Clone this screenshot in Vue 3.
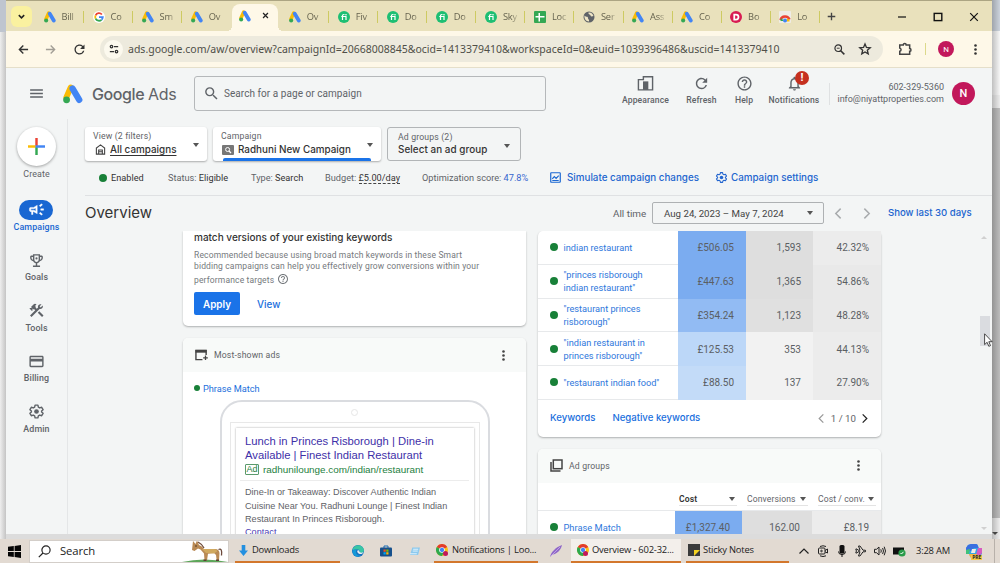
<script setup>
import { ref } from 'vue'

const tabs = [
  { icon: 'ads', label: 'Bill' },
  { icon: 'google', label: 'Co' },
  { icon: 'ads', label: 'Sm' },
  { icon: 'ads', label: 'Ov' },
  { icon: 'ads', label: '', active: true },
  { icon: 'ads', label: 'Ov' },
  { icon: 'fi', label: 'Fiv' },
  { icon: 'fi', label: 'Do' },
  { icon: 'fi', label: 'Do' },
  { icon: 'fi', label: 'Sky' },
  { icon: 'sheet', label: 'Loc' },
  { icon: 'globe', label: 'Ser' },
  { icon: 'ads', label: 'Ass' },
  { icon: 'ads', label: 'Co' },
  { icon: 'dash', label: 'Bo' },
  { icon: 'looker', label: 'Lo' }
]

const navItems = [
  { id: 'campaigns', label: 'Campaigns', icon: 'campaign' },
  { id: 'goals', label: 'Goals', icon: 'trophy' },
  { id: 'tools', label: 'Tools', icon: 'tools' },
  { id: 'billing', label: 'Billing', icon: 'card' },
  { id: 'admin', label: 'Admin', icon: 'gear' }
]

const keywords = [
  { name: ['indian restaurant'], cost: '£506.05', clicks: '1,593', ctr: '42.32%', level: 1 },
  { name: ['"princes risborough', 'indian restaurant"'], cost: '£447.63', clicks: '1,365', ctr: '54.86%', level: 2 },
  { name: ['"restaurant princes', 'risborough"'], cost: '£354.24', clicks: '1,123', ctr: '48.28%', level: 3 },
  { name: ['"indian restaurant in', 'princes risborough"'], cost: '£125.53', clicks: '353', ctr: '44.13%', level: 4 },
  { name: ['"restaurant indian food"'], cost: '£88.50', clicks: '137', ctr: '27.90%', level: 5 }
]

const currentPage = ref('campaigns')

const navigate = (page) => {
  currentPage.value = page
}
</script>

<template>
  <svg class="sprite">
    <symbol id="ads" viewBox="0 0 24 24">
      <path d="M9.2 4.2 4 16" stroke="#fbbc04" stroke-width="7" stroke-linecap="round" />
      <path d="M11.5 5.5 19.5 19" stroke="#4285f4" stroke-width="7.6" stroke-linecap="round" />
      <circle cx="4.3" cy="19" r="4.1" fill="#34a853" />
    </symbol>
    <symbol id="google" viewBox="0 0 24 24">
      <circle cx="12" cy="12" r="12" fill="#fff" />
      <g fill="none" stroke-width="3.6">
        <path d="M17.8 7A7.6 7.6 0 0 0 5.2 8.6" stroke="#ea4335" />
        <path d="M5.2 8.6a7.6 7.6 0 0 0 0 6.8" stroke="#fbbc04" />
        <path d="M5.2 15.4a7.6 7.6 0 0 0 11.8 2.2" stroke="#34a853" />
        <path d="M17 17.6a7.6 7.6 0 0 0 2.6-5.2H12" stroke="#4285f4" />
      </g>
    </symbol>
    <symbol id="fi" viewBox="0 0 24 24">
      <circle cx="12" cy="12" r="12" fill="#1dbf73" />
      <path d="M9 18V9.5Q9 7 11.5 7H13M6.5 11H16v7" fill="none" stroke="#fff" stroke-width="2.4" />
      <circle cx="16" cy="7.4" r="1.6" fill="#fff" />
    </symbol>
    <symbol id="sheet" viewBox="0 0 24 24">
      <rect width="24" height="24" rx="2" fill="#34a853" />
      <path d="M3 11.5h18M10.5 4v17" stroke="#fff" stroke-width="3" />
    </symbol>
    <symbol id="globe" viewBox="0 0 24 24">
      <circle cx="12" cy="12" r="11" fill="#5f6368" />
      <path d="M3 9c3 4 7 1 7 5s3 2 2 7c-6 0-10-6-9-12zM11 3c-1 4 3 3 4 6s3 2 6 1c-1-4-5-8-10-7z" fill="#eee5c6" />
    </symbol>
    <symbol id="dash" viewBox="0 0 24 24">
      <circle cx="12" cy="12" r="12" fill="#d81b52" />
      <path d="M8.5 7H12a5 5 0 0 1 0 10H8.500z" fill="none" stroke="#fff" stroke-width="3.500" />
    </symbol>
    <symbol id="looker" viewBox="0 0 24 24">
      <rect width="24" height="24" rx="2" fill="#efece6" />
      <path d="M3 18a9.500 9.500 0 0 1 18-1" fill="none" stroke="#ea4335" stroke-width="5" />
      <path d="M3 20a9 9 0 0 1 2-6l4 6z" fill="#34a853" />
      <path d="M15 21l1-6 5 2v4z" fill="#fbbc04" />
      <circle cx="12" cy="19" r="4" fill="#4285f4" />
    </symbol>
    <symbol id="chrome" viewBox="0 0 24 24">
      <circle cx="12" cy="12" r="12" fill="#fbc116" />
      <path d="M12 12 1.600 6a12 12 0 0 1 20.800 0z" fill="#e33b2e" />
      <path d="M12 12 1.600 6A12 12 0 0 0 12 24l4-8z" fill="#2da94f" />
      <circle cx="12" cy="12" r="5.600" fill="#fff" />
      <circle cx="12" cy="12" r="4.300" fill="#4285f4" />
    </symbol>
    <symbol id="search" viewBox="0 0 24 24">
      <path d="M15.500 14h-.79l-.28-.27A6.471 6.471 0 0 0 16 9.500 6.500 6.500 0 1 0 9.500 16c1.610 0 3.090-.59 4.230-1.570l.27.28v.79l5 4.990L20.490 19l-4.990-5zm-6 0C7.010 14 5 11.990 5 9.500S7.010 5 9.500 5 14 7.010 14 9.500 11.990 14 9.500 14z" />
    </symbol>
    <symbol id="menu" viewBox="0 0 24 24">
      <path d="M3 18h18v-2H3v2zm0-5h18v-2H3v2zm0-7v2h18V6H3z" />
    </symbol>
    <symbol id="refresh" viewBox="0 0 24 24">
      <path d="M17.650 6.350A7.958 7.958 0 0 0 12 4c-4.420 0-7.990 3.580-7.990 8s3.570 8 7.990 8c3.730 0 6.840-2.550 7.730-6h-2.080A5.990 5.990 0 0 1 12 18c-3.310 0-6-2.690-6-6s2.690-6 6-6c1.660 0 3.140.69 4.220 1.780L13 11h7V4l-2.350 2.350z" />
    </symbol>
    <symbol id="help" viewBox="0 0 24 24">
      <path d="M11 18h2v-2h-2v2zm1-16C6.480 2 2 6.480 2 12s4.480 10 10 10 10-4.480 10-10S17.520 2 12 2zm0 18c-4.410 0-8-3.590-8-8s3.590-8 8-8 8 3.590 8 8-3.590 8-8 8zm0-14c-2.210 0-4 1.790-4 4h2c0-1.100.9-2 2-2s2 .9 2 2c0 2-3 1.750-3 5h2c0-2.250 3-2.500 3-5 0-2.210-1.790-4-4-4z" />
    </symbol>
    <symbol id="bell" viewBox="0 0 24 24">
      <path d="M12 22c1.100 0 2-.9 2-2h-4c0 1.100.9 2 2 2zm6-6v-5c0-3.070-1.630-5.640-4.500-6.320V4c0-.83-.67-1.500-1.500-1.500s-1.500.67-1.500 1.500v.68C7.640 5.360 6 7.920 6 11v5l-2 2v1h16v-1l-2-2zm-2 1H8v-6c0-2.480 1.510-4.500 4-4.500s4 2.020 4 4.500v6z" />
    </symbol>
    <symbol id="appearance" viewBox="0 0 24 24">
      <path d="M2 6.500h7V2.500h13V21H2z" fill="none" stroke="currentColor" stroke-width="2" />
      <path d="M8.500 9H16v12H8.500z" />
    </symbol>
    <symbol id="campaign" viewBox="0 0 24 24">
      <path d="M18 11v2h4v-2zM16 17.600l3.200 2.400 1.200-1.600-3.200-2.400zM20.400 5.600 19.200 4 16 6.400 17.200 8zM4 9a2 2 0 0 0-2 2v2c0 1.100.9 2 2 2h1v4h2v-4h1l5 3V6L8 9H4zm7 1v4.500L8.600 13H4v-2h4.600z" fill-rule="evenodd" stroke="currentColor" stroke-width=".6" />
    </symbol>
    <symbol id="trophy" viewBox="0 0 24 24">
      <path d="M19 5h-2V3H7v2H5c-1.100 0-2 .9-2 2v1c0 2.550 1.920 4.630 4.390 4.940.63 1.500 1.980 2.630 3.610 2.960V19H7v2h10v-2h-4v-3.100c1.630-.33 2.980-1.460 3.610-2.960C19.080 12.630 21 10.550 21 8V7c0-1.100-.9-2-2-2zM5 8V7h2v3.820C5.840 10.400 5 9.300 5 8zm7 6c-1.650 0-3-1.350-3-3V5h6v6c0 1.650-1.350 3-3 3zm7-6c0 1.300-.84 2.400-2 2.820V7h2v1z" />
      <circle cx="12" cy="9" r="1.500" />
    </symbol>
    <symbol id="tools" viewBox="0 0 24 24">
      <path d="M13.780 15.170l2.120-2.120 6 6-2.120 2.120zM17.500 10c1.930 0 3.500-1.570 3.500-3.500 0-.58-.16-1.120-.41-1.600l-2.700 2.700-1.490-1.490 2.700-2.700c-.48-.25-1.020-.41-1.600-.41C15.570 3 14 4.570 14 6.500c0 .41.08.8.21 1.160l-1.850 1.850-1.780-1.780.71-.71-1.410-1.410L12 3.490a3 3 0 0 0-4.240 0L4.220 7.030l1.410 1.410H2.810l-.71.71 3.540 3.540.71-.71V9.150l1.410 1.410.71-.71 1.780 1.780-7.410 7.410 2.120 2.120L16.340 9.790c.36.13.75.21 1.160.21z" />
    </symbol>
    <symbol id="card" viewBox="0 0 24 24">
      <path d="M20 4H4c-1.110 0-1.990.89-1.990 2L2 18c0 1.110.89 2 2 2h16c1.110 0 2-.89 2-2V6c0-1.110-.89-2-2-2zm0 14H4v-6h16v6zm0-10H4V6h16v2z" />
    </symbol>
    <symbol id="gear" viewBox="0 0 24 24">
      <path d="M10 3h4l.6 2.800 2 1.150 2.700-.9 2 3.450L19.200 11.400v1.200l2.100 1.900-2 3.450-2.700-.9-2 1.150L14 21h-4l-.6-2.800-2-1.150-2.700.9-2-3.450 2.100-1.900v-1.200L2.700 9.500l2-3.450 2.700.9 2-1.150z" fill="none" stroke="currentColor" stroke-width="2" stroke-linejoin="round" />
      <circle cx="12" cy="12" r="3.300" />
    </symbol>
    <symbol id="dots" viewBox="0 0 24 24">
      <circle cx="12" cy="4.500" r="2.400" /><circle cx="12" cy="12" r="2.400" /><circle cx="12" cy="19.500" r="2.400" />
    </symbol>
    <symbol id="left" viewBox="0 0 24 24">
      <path d="M16 3 7 12l9 9" fill="none" stroke="currentColor" stroke-width="2.700" />
    </symbol>
    <symbol id="right" viewBox="0 0 24 24">
      <path d="M8 3l9 9-9 9" fill="none" stroke="currentColor" stroke-width="2.700" />
    </symbol>
  </svg>

  <div class="desktop">
    <div class="behind-left"></div>
    <div class="behind-right"><i></i></div>

    <div class="window">
      <div class="tab-strip">
        <span class="tab-search">
          <svg viewBox="0 0 10 10"><path d="M2 3.500 5 6.500 8 3.500" fill="none" stroke="#222" stroke-width="1.700" /></svg>
        </span>
        <div v-for="(tab, i) in tabs" :key="i" class="tab" :class="{ active: tab.active, flush: i === 3 }">
          <svg><use :href="'#' + tab.icon" /></svg>
          <span v-if="!tab.active" class="tab-label">{{ tab.label }}</span>
          <svg v-else class="tab-close" viewBox="0 0 10 10"><path d="M1.500 1.500l7 7M8.500 1.500l-7 7" stroke="#222" stroke-width="1.800" /></svg>
        </div>
        <svg class="tab-new" viewBox="0 0 10 10"><path d="M5 .8v8.400M.8 5h8.400" stroke="#444" stroke-width="1.500" /></svg>
        <div class="window-buttons">
          <svg viewBox="0 0 10 10"><path d="M1 5h8" stroke="#111" stroke-width="1.200" /></svg>
          <svg viewBox="0 0 10 10"><rect x="1.200" y="1.400" width="7.600" height="7.200" fill="none" stroke="#111" stroke-width="1.400" /></svg>
          <svg viewBox="0 0 10 10"><path d="M1.200 1.200l7.600 7.600M8.800 1.200 1.200 8.800" stroke="#111" stroke-width="1.200" /></svg>
        </div>
      </div>

      <div class="toolbar">
        <svg class="nav-arrow" viewBox="0 0 12 12"><path d="M11 6H1.500M5.800 1.700 1.500 6l4.300 4.300" fill="none" stroke="#333" stroke-width="1.500" /></svg>
        <svg class="nav-arrow faded" viewBox="0 0 12 12"><path d="M1 6h9.500M6.200 1.700 10.500 6l-4.300 4.300" fill="none" stroke="#333" stroke-width="1.500" /></svg>
        <svg class="reload"><use href="#refresh" /></svg>
        <div class="address">
          <span class="site-info">
            <svg viewBox="0 0 12 12" fill="none" stroke="#333" stroke-width="1.500"><circle cx="3" cy="3" r="1.500" /><path d="M6 3h5M1 9h5" /><circle cx="9" cy="9" r="1.500" /></svg>
          </span>
          <span class="url">ads.google.com/aw/overview?campaignId=20668008845&amp;ocid=1413379410&amp;workspaceId=0&amp;euid=1039396486&amp;uscid=1413379410</span>
          <svg class="zoom-icon" viewBox="0 0 12 12" fill="none" stroke="#333"><circle cx="4.600" cy="4.600" r="3.600" stroke-width="1.300" /><path d="M7.300 7.300l4 4" stroke-width="1.700" /><path d="M3 4.600h3.200" /></svg>
          <svg class="star" viewBox="0 0 24 24"><path d="M12 3.500l2.500 5.900 6.400.5-4.900 4.200 1.500 6.300-5.500-3.400-5.500 3.400L8 14.100 3.100 9.900l6.400-.5z" fill="none" stroke="#333" stroke-width="2.300" /></svg>
        </div>
        <svg class="puzzle" viewBox="0 0 24 24"><path d="M3 5h6c0-3 5-3 5 0h6v6c3 0 3 5 0 5v5H3v-5c3-.5 3-5 0-5.500z" fill="none" stroke="#444" stroke-width="2.600" /></svg>
        <i class="toolbar-line"></i>
        <span class="profile">N</span>
        <svg class="browser-menu"><use href="#dots" /></svg>
      </div>

      <header class="header">
        <svg class="menu-icon"><use href="#menu" /></svg>
        <svg class="logo"><use href="#ads" /></svg>
        <span class="brand">Google <b>Ads</b></span>
        <div class="search-box">
          <svg><use href="#search" /></svg>
          <span>Search for a page or campaign</span>
        </div>
        <div class="actions">
          <div class="action appearance"><svg><use href="#appearance" /></svg><span>Appearance</span></div>
          <div class="action refresh"><svg><use href="#refresh" /></svg><span>Refresh</span></div>
          <div class="action help"><svg><use href="#help" /></svg><span>Help</span></div>
          <div class="action notifications"><svg><use href="#bell" /></svg><em>!</em><span>Notifications</span></div>
        </div>
        <div class="account">
          <span>602-329-5360</span>
          <span class="email">info@niyattproperties.com</span>
        </div>
        <span class="avatar">N</span>
      </header>

      <div class="body">
        <nav class="sidebar">
          <div class="create">
            <span>
              <svg viewBox="0 0 18 18" stroke-width="2.600"><path d="M9 0v9" stroke="#ea4335" /><path d="M9 9v9" stroke="#34a853" /><path d="M0 9h8" stroke="#fbbc04" /><path d="M8 9h10" stroke="#4285f4" /></svg>
            </span>
            Create
          </div>
          <div
            v-for="item in navItems"
            :key="item.id"
            class="nav-item"
            :class="{ active: currentPage === item.id }"
            @click="navigate(item.id)"
          >
            <span class="nav-icon"><svg><use :href="'#' + item.icon" /></svg></span>
            <span class="nav-label">{{ item.label }}</span>
          </div>
        </nav>

        <main class="main">
          <div class="filters">
            <div class="filter view">
              <small>View (2 filters)</small>
              <div class="filter-value">
                <svg class="home" viewBox="0 0 12 12" fill="none" stroke="#444" stroke-width="1.200"><path d="M1.500 11V4.500L6 1l4.500 3.500V11zM4 11V6.500h4V11M4 8.500h4" /></svg>
                <span class="underlined">All campaigns</span>
              </div>
              <i class="caret"></i>
            </div>
            <div class="filter campaign">
              <small>Campaign</small>
              <div class="filter-value">
                <svg class="camp" viewBox="0 0 12 10"><rect width="12" height="10" rx="1" fill="#777" /><circle cx="5.600" cy="4.500" r="2" fill="none" stroke="#fff" /><path d="M7 6l2 2" stroke="#fff" stroke-width="1.200" /></svg>
                <span>Radhuni New Campaign</span>
              </div>
              <i class="caret"></i>
            </div>
            <div class="filter group">
              <small>Ad groups (2)</small>
              <div class="filter-value"><span>Select an ad group</span></div>
              <i class="caret"></i>
            </div>
          </div>

          <div class="status">
            <span class="s-enabled"><i class="dot"></i><b>Enabled</b></span>
            <span class="s-status">Status: <b>Eligible</b></span>
            <span class="s-type">Type: <b>Search</b></span>
            <span class="s-budget">Budget: <b class="dashed">£5.00/day</b></span>
            <span class="s-score">Optimization score: <a>47.8%</a></span>
            <span class="s-link simulate">
              <svg viewBox="0 0 12 12" fill="none" stroke="#1a67d2" stroke-width="1.300"><rect x=".8" y=".8" width="10.400" height="10.400" rx=".6" /><path d="M2.500 7.500 4.700 5l2 2L9.500 4M2.500 9.300h7" /></svg>
              Simulate campaign changes
            </span>
            <span class="s-link settings"><svg><use href="#gear" /></svg>Campaign settings</span>
          </div>

          <div class="title-row">
            <h1>Overview</h1>
            <span class="range-label">All time</span>
            <div class="range"><span>Aug 24, 2023 – May 7, 2024</span><i class="caret"></i></div>
            <svg class="prev"><use href="#left" /></svg>
            <svg class="next"><use href="#right" /></svg>
            <span class="last-days">Show last 30 days</span>
          </div>

          <div class="content">
            <div class="column left">
              <section class="box recommendation">
                <h3>match versions of your existing keywords</h3>
                <p>Recommended because using broad match keywords in these Smart<br>bidding campaigns can help you effectively grow conversions within your<br>performance targets <svg><use href="#help" /></svg></p>
                <div class="buttons"><button>Apply</button><a>View</a></div>
              </section>

              <section class="box shown-ads">
                <div class="box-head">
                  <svg class="head-icon" viewBox="0 0 14 12"><path d="M12 6V1H1v10h7" fill="none" stroke="#444" stroke-width="1.500" /><path d="M.5.500h12v3H.5z" fill="#444" /><path d="M11.300 6.500v5M8.800 9h5" stroke="#444" stroke-width="1.400" /></svg>
                  <span>Most-shown ads</span>
                  <svg class="more"><use href="#dots" /></svg>
                </div>
                <div class="ad-group"><i class="dot"></i>Phrase Match</div>
                <div class="phone">
                  <i class="camera"></i>
                  <div class="screen">
                    <div class="ad">
                      <div class="ad-title">Lunch in Princes Risborough | Dine-in<br>Available | Finest Indian Restaurant</div>
                      <div class="ad-url"><span>Ad</span>radhunilounge.com/indian/restaurant</div>
                      <div class="ad-text">Dine-In or Takeaway: Discover Authentic Indian<br>Cuisine Near You. Radhuni Lounge | Finest Indian<br>Restaurant In Princes Risborough.<br><a>Contact</a></div>
                    </div>
                  </div>
                </div>
              </section>
            </div>

            <div class="column right">
              <section class="box keywords">
                <div v-for="row in keywords" :key="row.cost" class="row" :class="'level-' + row.level">
                  <div class="cell name">
                    <i class="dot"></i>
                    <div><div v-for="line in row.name" :key="line">{{ line }}</div></div>
                  </div>
                  <div class="cell cost">{{ row.cost }}</div>
                  <div class="cell clicks">{{ row.clicks }}</div>
                  <div class="cell ctr">{{ row.ctr }}</div>
                </div>
                <div class="box-foot">
                  <a>Keywords</a>
                  <a class="negative">Negative keywords</a>
                  <svg class="page-prev"><use href="#left" /></svg>
                  <span>1 / 10</span>
                  <svg class="page-next"><use href="#right" /></svg>
                </div>
              </section>

              <section class="box groups">
                <div class="box-head">
                  <svg class="head-icon" viewBox="0 0 13 13" fill="none" stroke="#444" stroke-width="1.500"><rect x="3.300" y="1" width="8.700" height="8.700" /><path d="M1 3v9h9.500" /></svg>
                  <span>Ad groups</span>
                  <svg class="more"><use href="#dots" /></svg>
                </div>
                <div class="columns">
                  <div class="sorted">Cost<i class="caret"></i></div>
                  <div class="col-conv">Conversions<i class="caret"></i></div>
                  <div class="col-cpc">Cost / conv.<i class="caret"></i></div>
                </div>
                <div class="row level-1">
                  <div class="cell name"><i class="dot"></i>Phrase Match</div>
                  <div class="cell cost">£1,327.40</div>
                  <div class="cell clicks">162.00</div>
                  <div class="cell ctr">£8.19</div>
                </div>
              </section>
            </div>
            <i class="thumb"></i>
            <i class="scroll-up"></i>
            <i class="scroll-down"></i>
          </div>
        </main>
      </div>
    </div>

    <div class="taskbar">
      <svg class="start" viewBox="0 0 13 13"><path d="M0 1.800l5.800-.8v5.100H0zM6.600.9 13 0v6.100H6.600zM0 6.900h5.800V12L0 11.200zM6.600 6.900H13V13l-6.400-.9z" fill="#050505" /></svg>
      <div class="task-search">
        <svg viewBox="0 0 13 13" fill="none" stroke="#222" stroke-width="1.200"><circle cx="8" cy="5" r="4.100" /><path d="M5 8 .8 12.200" /></svg>
        <span>Search</span>
        <svg class="donkey" viewBox="0 0 46 22">
          <path d="M0 22q22-5 46 0z" fill="#5da65a" />
          <path d="M11 1l2.500 3L15 .500l2 4.500q3 1 5 4h11q4 0 4.500 4l-.5 7.500h-2.300l-.7-5.500-2-2-6 .8-1 6.700h-2.500l-.5-7-3.500-4-2.500-1-3.500 2.500-2.500-1z" fill="#b98a55" />
          <path d="M20 9h12q3 0 3 2.500l-3 2-8-.5z" fill="#d0a95f" />
          <path d="M16 2q4 2 6 6M36.500 9.500q4-2 3 6" fill="none" stroke="#6d4a3b" stroke-width="1.300" />
          <path d="M21.500 20.300h3M34 20.300h3" stroke="#5b3e35" stroke-width="1.500" />
          <circle cx="14" cy="6" r=".7" fill="#2c1d18" />
        </svg>
      </div>
      <div class="task downloads">
        <svg viewBox="0 0 10 12"><path d="M3 0h4v6h3l-5 6-5-6h3z" fill="#2490e0" /></svg>Downloads
      </div>
      <svg class="edge" viewBox="0 0 24 24">
        <circle cx="12" cy="12" r="12" fill="#1672c0" />
        <path d="M1 10C3-3 22-3 24 10c0 6-6 7-9 5 2-4-1-7-5-6-4 0-7 2-9 1z" fill="#39c6a4" />
        <path d="M9 10c-3 4 0 12 9 11-9 6-17-1-17-9 2-4 6-4 8-2z" fill="#1599d8" />
        <path d="M11 11q4-2 4 3 4 3 8 0-1 3-4 4c-6 1-10-4-8-7z" fill="#e9eef2" />
      </svg>
      <svg class="store" viewBox="0 0 24 24">
        <path d="M8 6V2h8v4" fill="none" stroke="#1b6db5" stroke-width="2" />
        <rect y="5" width="24" height="18" rx="2" fill="#17508c" />
        <path d="M7 9h4.500v4.500H7z" fill="#f25022" /><path d="M12.500 9H17v4.500h-4.500z" fill="#7fba00" />
        <path d="M7 14.500h4.500V19H7z" fill="#00a4ef" /><path d="M12.500 14.500H17V19h-4.500z" fill="#ffb900" />
      </svg>
      <svg class="notepad" viewBox="0 0 24 20"><path d="M6 1h17l-4 17H1z" fill="#8cc9ee" /><path d="M8 5h11M7 9h11M1 15h15" stroke="#e9f6fd" stroke-width="2" /></svg>
      <div class="task notes">
        <svg><use href="#chrome" /></svg><em></em><span>Notifications | Loo...</span>
      </div>
      <svg class="feather" viewBox="0 0 12 12"><path d="M0 12C1 7 6 2 12 0 11 5 7 9 2.500 9.500z" fill="#9068c8" /><path d="M1 11l9-9" stroke="#c9aee8" stroke-width=".8" /></svg>
      <div class="task overview">
        <svg><use href="#chrome" /></svg><em></em><span>Overview - 602-32...</span>
      </div>
      <div class="task sticky">
        <svg viewBox="0 0 12 12"><path d="M0 0h12v12H0z" fill="#3a3a3a" /><path d="M6 12V6h6z" fill="#f5d21f" /></svg><span>Sticky Notes</span>
      </div>
      <div class="tray">
        <svg viewBox="0 0 12 12" fill="none" stroke="#222" stroke-width="1.200"><path d="M1.500 8.500l4.500-4.500 4.500 4.500" /></svg>
        <svg viewBox="0 0 12 12" fill="none" stroke="#222"><path d="M3 1.500q3-1.500 6 0M3 10.800q3 1.500 6 0" /><rect x="1.500" y="3" width="6.500" height="6" rx="1" /><path d="M8 5.500l2.500-1.500v4L8 6.800" /><circle cx="4.500" cy="6" r=".8" /></svg>
        <svg viewBox="0 0 12 12"><rect x="3.500" y="0" width="5" height="8.500" rx="1.500" fill="#111" /><path d="M2.500 6.500q0 3 3.500 3t3.500-3M6 9.500V12" fill="none" stroke="#111" /></svg>
        <svg viewBox="0 0 12 12" fill="none" stroke="#222"><path d="M.8 4h1.200l1 1.200h2L3.500 1H5l3 4.200h2.300q1.200.8 0 1.600H8L5 11H3.500L5 6.800H3L2 8H.8l.6-2z" /></svg>
        <svg viewBox="0 0 12 12" fill="none" stroke="#222"><path d="M.5 4.300h2L5 2v8L2.500 7.700h-2zM6.800 4.300q1 1.700 0 3.400M8.600 3q1.800 3 0 6M10.200 1.700q2.600 4.300 0 8.600" /></svg>
        <svg viewBox="0 0 12 12"><path d="M0 2.500h11v7H0z" fill="#111" /><circle cx="9" cy="8" r="3.600" fill="#2a9c4a" /><path d="M7.500 8l1 1 2-2.200" fill="none" stroke="#fff" /></svg>
      </div>
      <span class="clock">3:28 AM</span>
      <div class="copilot">
        <svg viewBox="0 0 16 16">
          <path d="M5 1h5q1.500 0 2 2l.8 2H16v6l-4 4H6q-1.500 0-2-2l-.8-2H0V5l2-3z" fill="#37a6e6" />
          <path d="M5 1h5q1.500 0 2 2l.5 2H8L5 8 0 7V5l2-3z" fill="#3b6fe0" />
          <path d="M0 7l4-1-1 5H0z" fill="#3fc27a" />
          <path d="M12 5h4v5l-4 5H9z" fill="#d65bc0" />
          <path d="M3 11h8l-1 4H6q-2 0-3-4z" fill="#f3b33c" />
          <path d="M6 6h4l-1 4H5z" fill="#f1ece6" />
        </svg>
        <span>PRE</span>
      </div>
      <i class="show-desktop"></i>
    </div>

    <svg class="cursor" viewBox="0 0 9 14"><path d="M.6.8v10.800l2.500-2.300 1.700 4 1.700-.7-1.700-3.900h3.300z" fill="#fff" stroke="#222" stroke-width=".8" /></svg>
  </div>
</template>

<style>
body {
  margin: 0;
  overflow: hidden;
}
</style>

<style scoped>
* {
  box-sizing: border-box;
}

svg {
  display: block;
  flex: none;
  overflow: visible;
}

svg:not([fill]) {
  fill: currentColor;
}

i,
em {
  font-style: normal;
  flex: none;
}

.sprite {
  position: absolute;
  width: 0;
  height: 0;
}

.desktop {
  position: relative;
  width: 1000px;
  height: 563px;
  overflow: hidden;
  display: flex;
  flex-direction: column;
  background: #dcdcdc;
  font-family: Roboto, "Liberation Sans", sans-serif;
  color: #5f6368;
  white-space: nowrap;
}

.behind-left {
  position: absolute;
  left: 0;
  top: 0;
  width: 6px;
  height: 539px;
  background: linear-gradient(#bfc5cf 0 32px, transparent 32px), linear-gradient(90deg, #eeeeee, #c4c4c4);
}

.behind-right {
  position: absolute;
  right: 0;
  top: 0;
  width: 8px;
  height: 539px;
  background: linear-gradient(90deg, rgba(0, 0, 0, 0.22), transparent), linear-gradient(#ccd3dc 0 31px, #f6f6f6 31px 95px, #ececec 95px 108px, #bdbdbd 108px 518px, #eeeeee 518px);
}

.behind-right i {
  position: absolute;
  left: 0;
  bottom: 4px;
  border: 3px solid transparent;
  border-top-color: #444;
  border-bottom: 0;
}

.window {
  position: relative;
  width: 986px;
  height: 534px;
  margin-left: 6px;
  background: #f3f5f5;
  display: flex;
  flex-direction: column;
  overflow: hidden;
  flex: none;
}

.tab-strip {
  display: flex;
  align-items: center;
  height: 31px;
  padding: 1px 13px 0 5px;
  background: #e9e1bc;
  border-top: 1px solid #aca583;
  flex: none;
}

.tab-search {
  width: 21px;
  height: 21px;
  border-radius: 6px;
  background: #faf1a0;
  display: grid;
  place-items: center;
  margin-right: 3px;
}

.tab-search svg {
  width: 9px;
  height: 9px;
}

.tab {
  position: relative;
  display: flex;
  align-items: center;
  width: 49.05px;
  height: 12px;
  padding-left: 8.5px;
  border-right: 1px solid #cdca62;
  flex: none;
}

.tab > svg {
  width: 12px;
  height: 12px;
}

.tab.flush {
  border-right-color: transparent;
}

.tab-label {
  width: 17px;
  margin-left: 6px;
  font: 9.3px/14px "Open Sans", "Noto Sans", sans-serif;
  letter-spacing: -0.2px;
  color: #66634f;
  -webkit-mask-image: linear-gradient(90deg, #000 50%, transparent 95%);
}

.tab.active {
  height: 27px;
  align-self: flex-end;
  background: #fef8e8;
  border: 0;
  border-radius: 8px 8px 0 0;
  width: 46px;
  margin-left: 1px;
  margin-right: 2px;
  padding-left: 7px;
  padding-bottom: 4px;
}

.tab.active::before,
.tab.active::after {
  content: "";
  position: absolute;
  bottom: 0;
  width: 5px;
  height: 5px;
}

.tab.active::before {
  left: -5px;
  background: radial-gradient(circle at 0 0, transparent 5px, #fef8e8 5px);
}

.tab.active::after {
  right: -5px;
  background: radial-gradient(circle at 100% 0, transparent 5px, #fef8e8 5px);
}

.tab.active .tab-close {
  width: 7px;
  height: 7px;
  margin-left: 11px;
}

.tab-new {
  width: 9px;
  height: 9px;
  margin-left: 7px;
}

.window-buttons {
  display: flex;
  gap: 26px;
  margin-left: auto;
}

.window-buttons svg {
  width: 10px;
  height: 10px;
}

.toolbar {
  display: flex;
  align-items: center;
  height: 37px;
  padding: 0 8px 0 12px;
  background: #fef8e8;
  border-bottom: 1px solid #e5dfca;
  flex: none;
  color: #333;
}

.nav-arrow {
  width: 11px;
  height: 11px;
  margin-right: 16px;
}

.faded {
  opacity: 0.45;
}

.reload {
  width: 15px;
  height: 15px;
}

.address {
  display: flex;
  align-items: center;
  width: 783px;
  height: 26px;
  margin-left: 13px;
  padding: 0 11px 0 4px;
  border-radius: 13px;
  background: #edeadd;
  flex: none;
}

.site-info {
  display: grid;
  place-items: center;
  width: 19px;
  height: 19px;
  border-radius: 50%;
  background: #fcf9ee;
}

.site-info svg {
  width: 10px;
  height: 10px;
}

.url {
  margin-left: 5px;
  font: 10.5px/16px "Noto Sans", "Open Sans", sans-serif;
  color: #4f4f48;
}

.zoom-icon {
  width: 11px;
  height: 11px;
  margin-left: auto;
}

.star {
  width: 14px;
  height: 14px;
  margin-left: 13px;
}

.puzzle {
  width: 14px;
  height: 14px;
  margin-left: 15px;
}

.toolbar-line {
  width: 1px;
  height: 12px;
  margin-left: 13px;
  background: #dcd98a;
}

.profile,
.avatar {
  display: grid;
  place-items: center;
  border-radius: 50%;
  background: #c2185b;
  color: #fff;
  flex: none;
}

.profile {
  width: 16px;
  height: 16px;
  margin-left: 12px;
  font-size: 8px;
}

.browser-menu {
  width: 13px;
  height: 13px;
  margin-left: 15px;
}

.header {
  display: flex;
  align-items: center;
  height: 51px;
  padding-left: 24px;
  flex: none;
}

.menu-icon {
  width: 17px;
  height: 17px;
  margin-left: -2px;
}

.logo {
  width: 20px;
  height: 20px;
  margin-left: 18px;
}

.brand {
  width: 102px;
  padding-left: 9px;
  font: 500 16px/24px Inter, Roboto, sans-serif;
  letter-spacing: -0.4px;
}

.brand b {
  font-weight: 400;
}

.search-box {
  display: flex;
  align-items: center;
  width: 352px;
  height: 35px;
  margin-left: 9px;
  padding-left: 8px;
  border: 1px solid #b5b8ba;
  border-radius: 3px;
  font-size: 10px;
  letter-spacing: 0.05px;
  flex: none;
}

.search-box svg {
  width: 17px;
  height: 17px;
  margin-right: 4px;
}

.actions {
  display: flex;
  align-items: center;
  width: 208px;
  height: 22px;
  margin-left: 76px;
  border-right: 1px solid #dfe1e2;
}

.action {
  position: relative;
  display: flex;
  flex-direction: column;
  align-items: center;
  gap: 2px;
  font-size: 8.6px;
  font-weight: 500;
  letter-spacing: 0.1px;
  line-height: 12px;
  margin-top: -7px;
}

.action svg {
  width: 17px;
  height: 17px;
}

.action.appearance {
  width: 47px;
}

.action.refresh {
  width: 31px;
  margin-left: 17px;
}

.action.help {
  width: 20px;
  margin-left: 17px;
}

.action.notifications {
  width: 52px;
  margin-left: 14px;
}

.action em {
  position: absolute;
  left: 27px;
  top: -4px;
  width: 14px;
  height: 14px;
  border-radius: 50%;
  background: #c5301f;
  color: #fff;
  font-size: 11px;
  font-weight: 700;
  line-height: 14px;
  text-align: center;
}

.account {
  display: flex;
  flex-direction: column;
  align-items: flex-end;
  width: 114px;
  font-size: 9px;
  line-height: 11.5px;
}

.avatar {
  width: 23px;
  height: 23px;
  margin-left: 8px;
  font-size: 11px;
  font-weight: 500;
}

.body {
  display: flex;
  flex: 1;
  min-height: 0;
}

.sidebar {
  width: 62px;
  border-right: 1px solid #e4e6e7;
  padding-top: 8px;
  display: flex;
  flex-direction: column;
  align-items: center;
  font-size: 8.9px;
  font-weight: 500;
  letter-spacing: 0.1px;
  flex: none;
}

.create {
  display: flex;
  flex-direction: column;
  align-items: center;
  height: 71px;
  line-height: 14px;
  font-weight: 400;
}

.create span {
  display: grid;
  place-items: center;
  width: 39px;
  height: 39px;
  margin-bottom: 1px;
  border-radius: 50%;
  background: #fff;
  box-shadow: 0 1px 3px rgba(0, 0, 0, 0.35);
}

.create svg {
  width: 17px;
  height: 17px;
}

.nav-item {
  display: flex;
  flex-direction: column;
  align-items: center;
  height: 50.6px;
  padding-top: 1.500px;
  cursor: pointer;
}

.nav-icon {
  display: grid;
  place-items: center;
  width: 34px;
  height: 20px;
  border-radius: 10px;
}

.nav-icon svg {
  width: 17px;
  height: 17px;
}

.nav-label {
  line-height: 14px;
}

.active .nav-icon {
  background: #1967d2;
  color: #fff;
}

.active .nav-label {
  color: #1967d2;
}

.main {
  width: 924px;
  display: flex;
  flex-direction: column;
}

.filters {
  display: flex;
  gap: 6px;
  padding: 8px 0 0 17px;
  height: 42px;
  flex: none;
}

.filter {
  position: relative;
  height: 34px;
  padding: 4px 0 0 8px;
  border-radius: 3px;
  background: #fff;
  box-shadow: 0 1px 2px rgba(0, 0, 0, 0.3);
}

.filter small {
  display: block;
  font-size: 8.700px;
  line-height: 11px;
  letter-spacing: 0.15px;
}

.filter-value {
  display: flex;
  align-items: center;
  height: 15px;
  font: 500 9.900px/15px Inter, Roboto, sans-serif;
  color: #333;
}

.filter .caret {
  position: absolute;
  right: 8px;
  top: 16px;
}

.caret {
  border: 3.500px solid transparent;
  border-top: 4px solid #555;
  border-bottom: 0;
}

.view {
  width: 122px;
}

.view .home {
  width: 11px;
  height: 11px;
  margin: 0 4px 0 2px;
}

.underlined {
  text-decoration: underline;
  text-underline-offset: 2px;
}

.campaign {
  width: 168px;
}

.campaign::after {
  content: "";
  position: absolute;
  left: 10px;
  right: 10px;
  bottom: 0;
  height: 3px;
  border-radius: 2px 2px 0 0;
  background: #1a73e8;
}

.camp {
  width: 12px;
  height: 10px;
  margin: 0 4px 0 1px;
}

.filter.group {
  width: 134px;
  padding: 4px 0 0 10px;
  border: 1px solid #b2b5b7;
  background: transparent;
  box-shadow: none;
}

.group .filter-value {
  height: 13px;
  letter-spacing: 0.05px;
}

.group .caret {
  right: 10px;
}

.status {
  position: relative;
  display: flex;
  align-items: center;
  height: 35px;
  padding-bottom: 1px;
  margin-left: 17px;
  border-bottom: 1px solid #dfe1e3;
  font-size: 9.200px;
  flex: none;
}

.status b {
  font-weight: 400;
  color: #333;
}

.dot {
  display: inline-block;
  width: 8px;
  height: 8px;
  border-radius: 50%;
  background: #188038;
}

.status a {
  color: #3565cf;
}

.s-enabled {
  display: flex;
  align-items: center;
  gap: 4px;
  width: 83px;
  padding-left: 14px;
}

.s-status {
  width: 83px;
}

.s-type {
  width: 74px;
}

.s-budget {
  width: 97px;
}

.s-score {
  width: 128px;
}

.dashed {
  border-bottom: 1px dashed #444;
}

.s-link {
  display: flex;
  align-items: center;
  gap: 6px;
  font: 500 9.800px/14px Inter, Roboto, sans-serif;
  color: #2265cf;
}

.simulate {
  width: 165px;
}

.simulate svg {
  width: 11px;
  height: 11px;
}

.settings {
  gap: 3px;
}

.settings svg {
  width: 13px;
  height: 13px;
}

.title-row {
  display: flex;
  align-items: center;
  height: 35px;
  padding-left: 17px;
  padding-bottom: 1px;
  flex: none;
}

h1 {
  width: 528px;
  margin: 0;
  font: 400 15px/20px Inter, Roboto, sans-serif;
  color: #333;
}

.range-label {
  width: 39px;
  font-size: 9.900px;
}

.range {
  display: flex;
  align-items: center;
  justify-content: space-between;
  width: 172px;
  height: 22px;
  padding: 0 10px 0 11px;
  border: 1px solid #aeb1b3;
  border-radius: 2px;
  font-size: 9.700px;
  color: #444;
}

.prev,
.next {
  width: 13px;
  height: 13px;
  color: #a8abad;
}

.prev {
  margin-left: 8px;
}

.next {
  margin-left: 15px;
}

.last-days {
  margin-left: 15px;
  font: 500 9.600px/14px Inter, Roboto, sans-serif;
  color: #2265cf;
}

.content {
  position: relative;
  display: flex;
  gap: 12px;
  flex: 1;
  min-height: 0;
  padding-left: 115px;
  overflow: hidden;
}

.column {
  width: 343px;
  display: flex;
  flex-direction: column;
  gap: 12px;
}

.box {
  width: 343px;
  border-radius: 5px;
  background: #fff;
  box-shadow: 0 1px 2px rgba(60, 64, 67, 0.38);
  flex: none;
}

.recommendation {
  height: 95px;
  padding-left: 11px;
  border-radius: 0 0 5px 5px;
}

.recommendation h3 {
  margin: 0;
  font: 500 10px/13px Inter, Roboto, sans-serif;
  color: #333;
}

.recommendation p {
  margin: 6px 0 0;
  font-size: 8.500px;
  line-height: 11.400px;
  letter-spacing: 0.15px;
  color: #75797d;
}

.recommendation p svg {
  display: inline-block;
  width: 12px;
  height: 12px;
  vertical-align: -2px;
}

.buttons {
  display: flex;
  align-items: center;
  gap: 17px;
  margin-top: 6px;
  font: 500 9.900px/14px Inter, Roboto, sans-serif;
}

.buttons button {
  width: 46px;
  height: 23px;
  padding: 0;
  border: 0;
  border-radius: 2px;
  background: #1a73e8;
  color: #fff;
  font: inherit;
  font-weight: 600;
}

.buttons a,
.box-foot a {
  color: #1a6fdd;
}

.box-head {
  display: flex;
  align-items: center;
  height: 34px;
  padding: 0 16px 0 12px;
  border-radius: 5px 5px 0 0;
  background: #f8faf9;
  font-size: 8.700px;
  letter-spacing: 0.15px;
}

.head-icon {
  width: 13px;
  height: 12px;
  margin-right: 6px;
}

.more {
  width: 13px;
  height: 13px;
  margin-left: auto;
  color: #444;
}

.shown-ads {
  height: 300px;
}

.ad-group {
  display: flex;
  align-items: center;
  gap: 3px;
  height: 14px;
  margin: 9px 0 0 11px;
  font-size: 9.200px;
  color: #2470dc;
}

.ad-group .dot {
  width: 6px;
  height: 6px;
}

.phone {
  position: relative;
  width: 270px;
  height: 240px;
  margin: 5px 0 0 37px;
  padding: 20px 8px 0;
  border: 2px solid #dadce0;
  border-radius: 22px;
}

.camera {
  position: absolute;
  left: 129px;
  top: 7px;
  width: 7px;
  height: 7px;
  border: 1px solid #e6e6e6;
  border-radius: 50%;
}

.screen {
  height: 200px;
  padding: 5px 5px 0;
  border: 1px solid #e8e8e8;
}

.ad {
  height: 190px;
  padding: 7px 0 0 9px;
  box-shadow: 0 0 2px rgba(0, 0, 0, 0.35);
  font-family: "Liberation Sans", Arial, sans-serif;
}

.ad-title {
  font-size: 11.250px;
  line-height: 13.600px;
  color: #4030a8;
}

.ad-url {
  display: flex;
  align-items: center;
  gap: 4px;
  height: 14px;
  font-size: 9.900px;
  color: #24803e;
}

.ad-url span {
  border: 1px solid #5a9a6c;
  border-radius: 1px;
  font-size: 9px;
  line-height: 9px;
  width: 14px;
  text-align: center;
}

.ad-text {
  margin: 4px 5px 0 -5px;
  padding: 5px 0 0 5px;
  border-top: 1px solid #ececec;
  font-size: 9.150px;
  line-height: 13.400px;
}

.ad-text a {
  color: #4a3cb4;
}

.row {
  display: flex;
  height: 33.750px;
  font-size: 10px;
  color: #5b5f64;
}

.cell {
  display: flex;
  align-items: center;
  justify-content: flex-end;
  padding-right: 12px;
}

.cell.name {
  justify-content: flex-start;
  width: 140px;
  padding: 0 0 0 12px;
  gap: 5.500px;
  border-bottom: 1px solid #e7e9eb;
  font-size: 9.200px;
  line-height: 13px;
  color: #2f78dc;
}

.cost {
  width: 68px;
  background: #7bacf0;
}

.clicks {
  width: 67px;
  background: #dedede;
}

.ctr {
  width: 68px;
  background: #ececec;
}

.level-2 .ctr,
.level-3 .ctr {
  background: #e9e9e9;
}

.level-3 .cost {
  background: #92bbf3;
}

.level-3 .clicks {
  background: #e0e0e0;
}

.level-4 .cost {
  background: #bcd7f8;
}

.level-5 .cost {
  background: #c3dbf8;
}

.level-4 .clicks,
.level-5 .clicks {
  background: #f2f2f2;
}

.box-foot {
  display: flex;
  align-items: center;
  height: 37px;
  padding: 0 11px 0 12px;
  font-size: 9.700px;
}

.box-foot a {
  font: 500 9.600px/14px Inter, Roboto, sans-serif;
}

.box-foot .negative {
  margin-left: 17px;
}

.box-foot svg {
  width: 11px;
  height: 11px;
}

.page-prev {
  margin-left: auto;
  color: #999;
}

.box-foot span {
  margin: 0 3px 0 4px;
}

.page-next {
  color: #222;
}

.groups {
  height: 200px;
}

.groups .head-icon {
  height: 13px;
}

.columns {
  display: flex;
  align-items: flex-start;
  gap: 10px;
  height: 28px;
  padding: 10px 0 0 141px;
  border-bottom: 1px solid #e7e9eb;
  font-size: 8.600px;
  letter-spacing: 0.1px;
  line-height: 12px;
}

.columns > div {
  display: flex;
  align-items: center;
  justify-content: space-between;
  width: 61px;
  height: 13px;
  padding-right: 2px;
  border-bottom: 1px solid #e3e3e3;
}

.columns > .sorted {
  width: 58px;
  font-weight: 600;
  color: #333;
}

.columns > .col-cpc {
  width: 58px;
}

.groups .name {
  width: 137px;
  font-size: 9.300px;
}

.groups .cost {
  width: 67px;
}

.groups .clicks {
  width: 70px;
}

.groups .ctr {
  width: 69px;
}

.thumb {
  position: absolute;
  right: 2px;
  top: 85px;
  width: 10px;
  height: 30px;
  background: #dadce0;
}

.scroll-up,
.scroll-down {
  position: absolute;
  right: 5px;
  border: 3px solid transparent;
}

.scroll-up {
  top: 5px;
  border-bottom-color: #d0d0d0;
  border-top: 0;
}

.scroll-down {
  bottom: 4px;
  border-top-color: #d0d0d0;
  border-bottom: 0;
}

.taskbar {
  display: flex;
  align-items: center;
  height: 24px;
  margin-top: 5px;
  background: #e2dad2;
  font: 9.400px/20px "Open Sans", "Noto Sans", sans-serif;
  letter-spacing: -0.2px;
  color: #222;
  flex: none;
}

.start {
  width: 13px;
  height: 13px;
  margin-left: 8px;
}

.task-search {
  display: flex;
  align-items: center;
  gap: 9px;
  width: 200px;
  height: 23px;
  margin-left: 8px;
  padding-left: 8px;
  border: 1px solid #d3cec9;
  background: #fff;
  font-size: 11.300px;
  letter-spacing: -0.1px;
  overflow: hidden;
}

.task-search > svg {
  width: 13px;
  height: 13px;
}

.task-search > .donkey {
  width: 46px;
  height: 22px;
  margin-left: auto;
}

.task {
  position: relative;
  display: flex;
  align-items: center;
  height: 24px;
  border-bottom: 2px solid #d3772c;
  flex: none;
}

.task > svg {
  width: 12px;
  height: 12px;
}

.task em {
  position: absolute;
  width: 5px;
  height: 5px;
  border-radius: 50%;
  background: #c2185b;
  top: 12px;
}

.downloads {
  width: 105px;
  margin-left: 6px;
  padding-left: 4px;
  gap: 4px;
}

.downloads svg {
  width: 9px;
  height: 11px;
}

.edge {
  width: 12px;
  height: 12px;
  margin-left: 12px;
}

.store {
  width: 12px;
  height: 12px;
  margin-left: 16px;
}

.notepad {
  width: 12px;
  height: 9px;
  margin-left: 17px;
}

.notes {
  width: 104px;
  margin-left: 13px;
  padding-left: 2px;
  gap: 4px;
}

.notes em {
  left: 9px;
}

.feather {
  width: 12px;
  height: 12px;
  margin-left: 12px;
}

.overview {
  width: 110px;
  margin-left: 9px;
  padding-left: 6px;
  gap: 3px;
  background: #f3efeb;
}

.overview em {
  left: 12px;
}

.sticky {
  width: 103px;
  margin-left: 5px;
  padding-left: 2px;
  gap: 3px;
}

.tray {
  display: flex;
  gap: 7px;
  margin-left: 9px;
}

.tray svg {
  width: 12px;
  height: 12px;
}

.clock {
  width: 50px;
  margin-left: 11px;
}

.copilot {
  position: relative;
  flex: none;
}

.copilot svg {
  width: 16px;
  height: 16px;
}

.copilot span {
  position: absolute;
  right: 0;
  bottom: -1px;
  padding: 0 1px;
  background: #f7c948;
  font: 700 5px/5px "Open Sans", sans-serif;
}

.show-desktop {
  width: 1px;
  height: 24px;
  margin-left: 12px;
  background: #b8b1aa;
}

.cursor {
  position: absolute;
  left: 984px;
  top: 333px;
  width: 9px;
  height: 14px;
}
</style>
